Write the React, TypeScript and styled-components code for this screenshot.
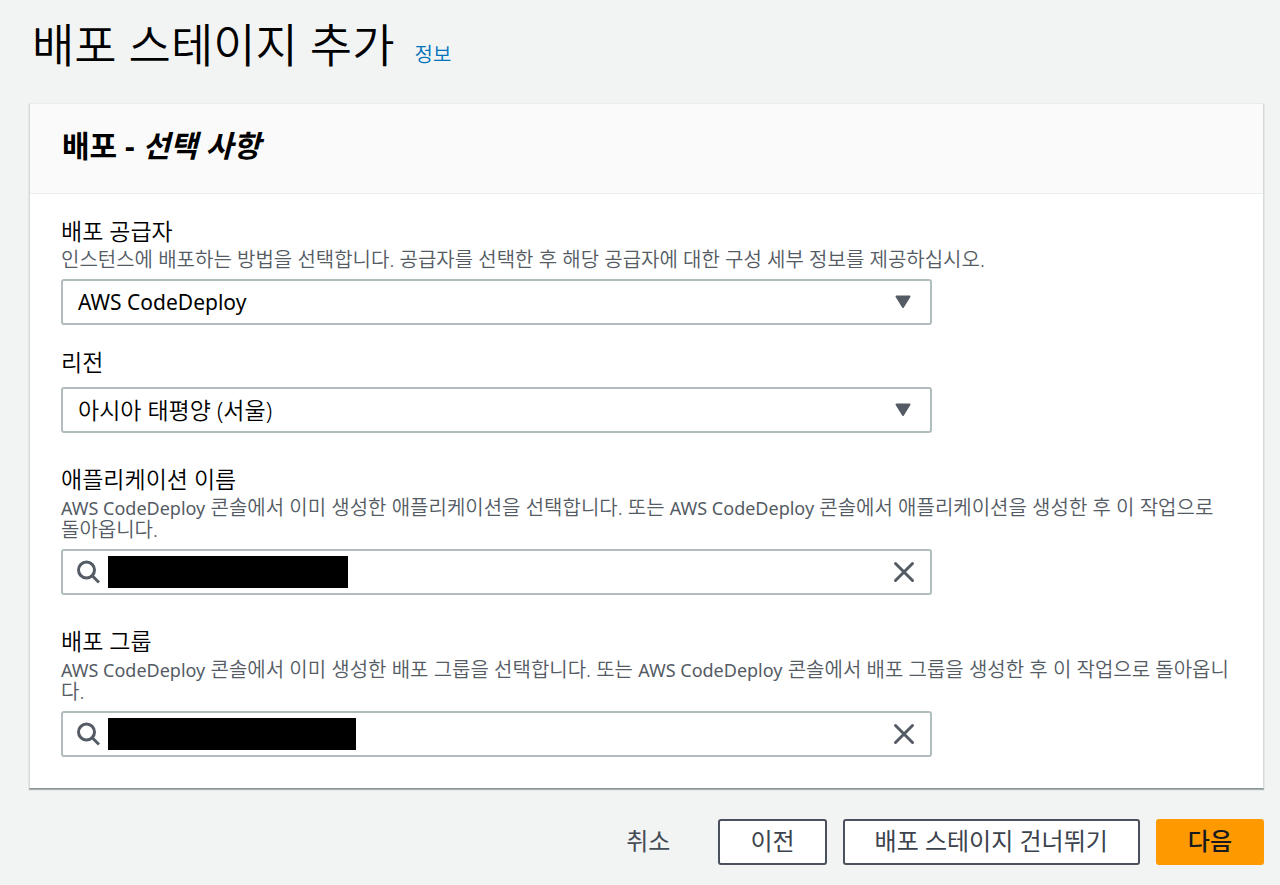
import React from "react";
import styled, { createGlobalStyle } from "styled-components";

const GlobalStyle = createGlobalStyle`
  * { box-sizing: border-box; }
  body {
    margin: 0;
    background: #f2f3f3;
    color: #16191f;
    font-family: "Noto Sans", "Noto Sans CJK KR", sans-serif;
  }
  button, input, select { font-family: inherit; }
`;

const Page = styled.main`
  padding: 14px 16px 20px 29px;
`;

const TitleBar = styled.header`
  display: flex;
  align-items: baseline;
  gap: 20px;
  padding-left: 3px;
  margin-bottom: 29px;
`;

const Title = styled.h1`
  margin: 0;
  font-size: 46px;
  line-height: 60px;
  font-weight: 350;
  color: #000;
`;

const InfoLink = styled.a`
  font-size: 20px;
  line-height: 24px;
  font-weight: 350;
  color: #0073bb;
  text-decoration: none;
`;

const Card = styled.section`
  background: #fff;
  border: 1px solid #d5dbdb;
  border-top-color: #eaeded;
  border-bottom-color: #879596;
  box-shadow: 0 1px 1px rgba(0, 28, 36, 0.3);
`;

const CardHeader = styled.div`
  padding: 24px 32px 29px;
  background: #fafafa;
  border-bottom: 1px solid #eaeded;
`;

const CardTitle = styled.h2`
  margin: 0;
  font-size: 30px;
  line-height: 36px;
  font-weight: 700;
  color: #000;
`;

const CardBody = styled.div`
  padding: 23px 31px 31px;
`;

const Field = styled.div<{ $gap?: number }>`
  margin-top: ${(p) => p.$gap ?? 0}px;
`;

const Label = styled.label`
  display: block;
  font-size: 23px;
  line-height: 28px;
  font-weight: 350;
  color: #000;
`;

const Description = styled.p`
  margin: 4px 0 0;
  font-size: 20px;
  line-height: 22px;
  font-weight: 350;
  color: #545b64;
`;

const Latin = styled.span`
  font-size: 18px;
  font-weight: 400;
`;

const Control = styled.div<{ $gap: number }>`
  position: relative;
  display: flex;
  align-items: center;
  width: calc(75% - 7px);
  height: 46px;
  margin-top: ${(p) => p.$gap}px;
  border: 2px solid #b0bcbd;
  border-radius: 3px;
  background: #fff;
`;

const Select = styled.select<{ $latin?: boolean }>`
  appearance: none;
  width: 100%;
  height: 100%;
  padding: 0 60px 0 15px;
  border: 0;
  background: transparent;
  color: #000;
  font-size: ${(p) => (p.$latin ? 21 : 23)}px;
  font-weight: ${(p) => (p.$latin ? 400 : 350)};
`;

const Caret = styled.svg`
  position: absolute;
  right: 19px;
  width: 16px;
  height: 14px;
  pointer-events: none;
`;

const SearchIcon = styled.svg`
  flex: none;
  width: 24px;
  height: 24px;
  margin-left: 13px;
`;

const Redaction = styled.span<{ $width: number }>`
  flex: none;
  width: ${(p) => p.$width}px;
  height: 32px;
  margin-left: 8px;
  background: #000;
`;

const SearchInput = styled.input`
  flex: 1;
  min-width: 0;
  height: 100%;
  border: 0;
  outline: 0;
  background: transparent;
  font-size: 23px;
`;

const ClearButton = styled.button`
  display: flex;
  padding: 0;
  margin-right: 15px;
  border: 0;
  background: transparent;
`;

const Actions = styled.footer`
  display: flex;
  justify-content: flex-end;
  gap: 16px;
  margin-top: 30px;
`;

const buttonLook = {
  link: { border: "transparent", fill: "transparent", text: "#444b55" },
  normal: { border: "#4a515c", fill: "#fff", text: "#3c434d" },
  primary: { border: "#ff9900", fill: "#ff9900", text: "#16191f" },
};

const Button = styled.button<{ $look: keyof typeof buttonLook }>`
  height: 46px;
  padding: 0 30px 3px;
  border: 2px solid ${(p) => buttonLook[p.$look].border};
  border-radius: 3px;
  background: ${(p) => buttonLook[p.$look].fill};
  color: ${(p) => buttonLook[p.$look].text};
  font-size: 24px;
  line-height: 28px;
  font-weight: ${(p) => (p.$look === "primary" ? 500 : 400)};
`;

function SelectBox({ id, value, latin, gap }: { id: string; value: string; latin?: boolean; gap: number }) {
  return (
    <Control $gap={gap}>
      <Select id={id} defaultValue={value} $latin={latin}>
        <option>{value}</option>
      </Select>
      <Caret viewBox="0 0 16 14" aria-hidden="true">
        <path d="M1.500 1.500h13L8 12z" fill="#545b64" stroke="#545b64" strokeWidth="2" strokeLinejoin="round" />
      </Caret>
    </Control>
  );
}

function SearchBox({ id, hidden }: { id: string; hidden: number }) {
  return (
    <Control $gap={8}>
      <SearchIcon viewBox="0 0 24 24" fill="none" stroke="#545b64" strokeWidth="3" aria-hidden="true">
        <circle cx="10.500" cy="10" r="8" />
        <path d="M16 15.500l7 7" />
      </SearchIcon>
      <Redaction $width={hidden} />
      <SearchInput id={id} type="text" />
      <ClearButton type="button" aria-label="지우기">
        <svg width="22" height="22" viewBox="0 0 22 22" stroke="#545b64" strokeWidth="3" strokeLinecap="round" aria-hidden="true">
          <path d="M2.500 2.500l17 17M19.500 2.500l-17 17" />
        </svg>
      </ClearButton>
    </Control>
  );
}

export default function App() {
  return (
    <>
      <GlobalStyle />
      <Page>
        <TitleBar>
          <Title>배포 스테이지 추가</Title>
          <InfoLink href="#info">정보</InfoLink>
        </TitleBar>
        <Card>
          <CardHeader>
            <CardTitle>
              배포 - <em>선택 사항</em>
            </CardTitle>
          </CardHeader>
          <CardBody>
            <Field>
              <Label htmlFor="provider">배포 공급자</Label>
              <Description>
                인스턴스에 배포하는 방법을 선택합니다. 공급자를 선택한 후 해당 공급자에 대한 구성 세부 정보를 제공하십시오.
              </Description>
              <SelectBox id="provider" value="AWS CodeDeploy" latin gap={8} />
            </Field>
            <Field $gap={23}>
              <Label htmlFor="region">리전</Label>
              <SelectBox id="region" value="아시아 태평양 (서울)" gap={11} />
            </Field>
            <Field $gap={32}>
              <Label htmlFor="application">애플리케이션 이름</Label>
              <Description>
                <Latin>AWS CodeDeploy</Latin> 콘솔에서 이미 생성한 애플리케이션을 선택합니다. 또는{" "}
                <Latin>AWS CodeDeploy</Latin> 콘솔에서 애플리케이션을 생성한 후 이 작업으로 돌아옵니다.
              </Description>
              <SearchBox id="application" hidden={240} />
            </Field>
            <Field $gap={32}>
              <Label htmlFor="group">배포 그룹</Label>
              <Description>
                <Latin>AWS CodeDeploy</Latin> 콘솔에서 이미 생성한 배포 그룹을 선택합니다. 또는{" "}
                <Latin>AWS CodeDeploy</Latin> 콘솔에서 배포 그룹을 생성한 후 이 작업으로 돌아옵니다.
              </Description>
              <SearchBox id="group" hidden={248} />
            </Field>
          </CardBody>
        </Card>
        <Actions>
          <Button type="button" $look="link">취소</Button>
          <Button type="button" $look="normal">이전</Button>
          <Button type="button" $look="normal">배포 스테이지 건너뛰기</Button>
          <Button type="button" $look="primary">다음</Button>
        </Actions>
      </Page>
    </>
  );
}
